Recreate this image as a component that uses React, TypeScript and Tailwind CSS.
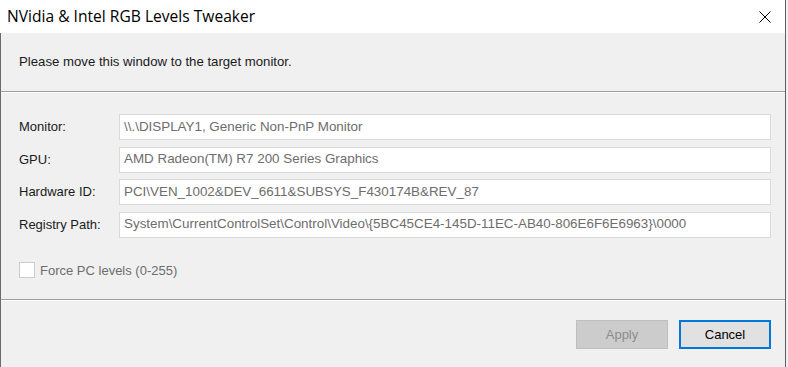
import React from 'react';

const rows = [
  { label: 'Monitor:', value: '\\\\.\\DISPLAY1, Generic Non-PnP Monitor' },
  { label: 'GPU:', value: 'AMD Radeon(TM) R7 200 Series Graphics' },
  { label: 'Hardware ID:', value: 'PCI\\VEN_1002&DEV_6611&SUBSYS_F430174B&REV_87' },
  {
    label: 'Registry Path:',
    value: 'System\\CurrentControlSet\\Control\\Video\\{5BC45CE4-145D-11EC-AB40-806E6F6E6963}\\0000',
  },
];

export default function App() {
  return (
    <div className="w-[788px] h-[367px] bg-[#f0f0f0] overflow-hidden flex font-['Liberation_Sans',Arial,sans-serif] text-[13px]">
      <div className="w-[786px] h-full flex flex-col border-r border-[#5f5f5f]">
        {/* title bar */}
        <div className="h-[33px] bg-white flex items-center justify-between pl-[7px] pr-[14px] shrink-0">
          <span className="font-['Open_Sans',sans-serif] text-[15.6px] text-black leading-none">
            NVidia &amp; Intel RGB Levels Tweaker
          </span>
          <svg width="12" height="12" viewBox="0 0 12 12" className="mt-[1px]">
            <path d="M0.5 0.5 L11.5 11.5 M11.5 0.5 L0.5 11.5" stroke="#000" strokeWidth="1" fill="none" />
          </svg>
        </div>

        <div className="flex-1 flex flex-col border-l border-[#6b6b6b]">
          <div className="h-[58px] flex items-center pl-[18px] text-[13.2px] text-[#1a1a1a]">
            Please move this window to the target monitor.
          </div>
          <div className="border-t border-[#a0a0a0] border-b border-b-white" />

          <div className="h-[206px] pl-[18px] pr-[14px] pt-[21px] flex flex-col">
            <div className="flex flex-col gap-[6.5px]">
              {rows.map((r) => (
                <div key={r.label} className="flex items-center h-[26px]">
                  <span className="w-[100px] text-[#1a1a1a]">{r.label}</span>
                  <div className="flex-1 h-full bg-white border border-[#d9d9d9] flex items-center px-[4px] text-[13.4px] text-[#6d6d6d] whitespace-nowrap overflow-hidden">
                    {r.value}
                  </div>
                </div>
              ))}
            </div>
            <label className="flex items-center mt-[23px] text-[#6d6d6d]">
              <span className="w-[16px] h-[16px] border border-[#cccccc] bg-white" />
              <span className="ml-[5px]">Force PC levels (0-255)</span>
            </label>
          </div>

          <div className="border-t border-[#a0a0a0] border-b border-b-white" />

          <div className="flex-1 flex justify-end items-start gap-[11px] pr-[14px] pt-[19px]">
            <button className="w-[92px] h-[29px] bg-[#cccccc] border border-[#bfbfbf] text-[#8c8c8c]">
              Apply
            </button>
            <button className="w-[92px] h-[29px] bg-[#e1e1e1] border-2 border-[#0078d7] text-black">
              Cancel
            </button>
          </div>
        </div>
      </div>
    </div>
  );
}
